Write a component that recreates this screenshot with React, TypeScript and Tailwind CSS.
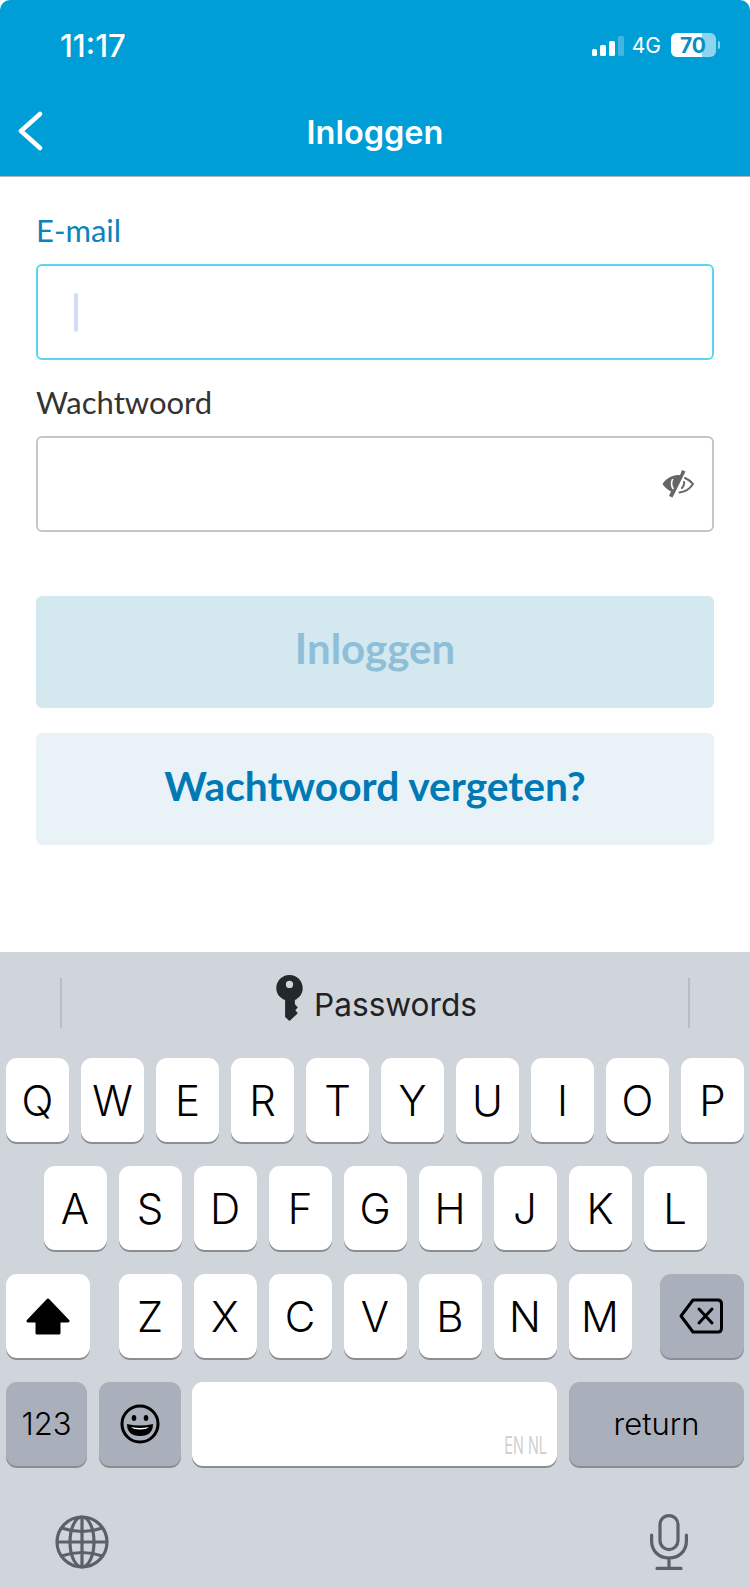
const SF = "font-['Inter','Liberation_Sans',sans-serif]";

const ROW1 = ["Q", "W", "E", "R", "T", "Y", "U", "I", "O", "P"];
const ROW2 = ["A", "S", "D", "F", "G", "H", "J", "K", "L"];
const ROW3 = ["Z", "X", "C", "V", "B", "N", "M"];

function Key({ label }: { label: string }) {
  return (
    <div className="w-[63px] h-[84px] rounded-[11px] bg-white shadow-[0_2px_0_#8b8d92] flex items-center justify-center pt-[1px] text-[42px] font-[350] text-black shrink-0">
      {label}
    </div>
  );
}

function ShiftIcon() {
  return (
    <svg className="mt-[2px]" width="44" height="38" viewBox="0 0 44 38">
      <path
        fill="#000"
        stroke="#000"
        strokeWidth="3"
        strokeLinejoin="round"
        d="M22 2 L42 23 H33 V35 H11 V23 H2 Z"
      />
    </svg>
  );
}

function DeleteIcon() {
  return (
    <svg className="-ml-[3px]" width="44" height="36" viewBox="0 0 44 36" fill="none" stroke="#000" strokeWidth="3" strokeLinecap="round" strokeLinejoin="round">
      <path d="M14 2 H39 Q42.500 2 42.500 6 V30 Q42.500 34 39 34 H14 L2 18 Z" />
      <path d="M20 11 L33 25 M33 11 L20 25" />
    </svg>
  );
}

function EmojiIcon() {
  return (
    <svg width="40" height="40" viewBox="0 0 40 40">
      <circle cx="20" cy="20" r="18" fill="none" stroke="#000" strokeWidth="3" />
      <ellipse cx="14" cy="14" rx="2.300" ry="3" fill="#000" />
      <ellipse cx="26" cy="14" rx="2.300" ry="3" fill="#000" />
      <path d="M7 20 Q20 23 33 20 Q33 32 20 32 Q7 32 7 20 Z" fill="#000" />
      <path d="M11 23 Q20 25 29 23 Q27 25.500 20 25.500 Q13 25.500 11 23 Z" fill="#fff" />
    </svg>
  );
}

function KeyIcon() {
  return (
    <svg width="27" height="46" viewBox="0 0 27 47">
      <path
        fill="#24272b"
        fillRule="evenodd"
        d="M13.500 0 C21 0 27 6 27 13.500 C27 19 23.500 23.500 19 25.500 V30 L22 33 L19.500 36 L22 39 L19 42 L13.500 47 L9 43 V25.500 C3.500 23.500 0 19 0 13.500 C0 6 6 0 13.500 0 Z M13.500 6 A3.700 3.700 0 1 0 13.500 13.400 A3.700 3.700 0 1 0 13.500 6 Z"
      />
    </svg>
  );
}

function GlobeIcon() {
  return (
    <svg width="54" height="54" viewBox="0 0 54 54" fill="none" stroke="#5c6169" strokeWidth="3.200">
      <circle cx="27" cy="27" r="25" />
      <ellipse cx="27" cy="27" rx="12" ry="25" />
      <path d="M27 2 V52 M2 27 H52" />
      <path d="M6.500 13 Q27 20 47.500 13 M6.500 41 Q27 34 47.500 41" />
    </svg>
  );
}

function MicIcon() {
  return (
    <svg width="38" height="56" viewBox="0 0 38 56" fill="none" stroke="#5c6169" strokeWidth="3.200" strokeLinecap="round">
      <rect x="10" y="1.600" width="18" height="34" rx="9" />
      <path d="M1.600 21 V27 C1.600 37 9 44 19 44 C29 44 36.400 37 36.400 27 V21" />
      <path d="M19 44 V54 M7 54.400 H31" />
    </svg>
  );
}

function EyeOffIcon() {
  return (
    <svg width="32" height="30" viewBox="0 0 32 30" fill="none">
      <path fill="#666666" d="M20 1 L23.500 2.500 L10.500 28.500 L7 27 L9 22.500 C5.500 20.500 2.500 18 0.500 15 C4 9.500 10 6 16 6 C17 6 17.500 6.100 18 6.200 Z" />
      <path stroke="#ffffff" strokeWidth="1.600" strokeLinecap="round" fill="none" d="M10.500 10.500 C9 14 9.500 17 11 19.500" />
      <path stroke="#666666" strokeWidth="2" strokeLinecap="round" d="M23 9 C26.500 10.500 29 12.500 31 15 C28 19.500 23.500 23 17.500 23.500 M22 13 C22.500 15.500 21.500 17.500 20 19" />
    </svg>
  );
}

function StatusIcons() {
  return (
    <div className="flex items-center">
      <div className="flex items-end gap-[3px] h-[20px] mt-[1px]">
        <div className="w-[5px] h-[7px] rounded-[1.500px] bg-white" />
        <div className="w-[5.500px] h-[11px] rounded-[1.500px] bg-white" />
        <div className="w-[6px] h-[15px] rounded-[1.500px] bg-white" />
        <div className="w-[6px] h-[20px] rounded-[1.500px] bg-white/25" />
      </div>
      <span className="ml-[8px] text-[21px] font-normal text-white leading-none">4G</span>
      <div className="ml-[10px] w-[45px] h-[24px] rounded-[6px] bg-[#8ed3f0] overflow-hidden relative">
        <div className="w-[31px] h-full bg-white" />
        <span className="absolute inset-0 pr-[1px] flex items-center justify-center text-[21px] font-bold leading-none text-[#0c8ec4]">70</span>
      </div>
      <div className="ml-[2px] w-[2px] h-[8px] rounded-r-full bg-[#8ed3f0]" />
    </div>
  );
}

export default function App() {
  return (
    <div className={`w-[750px] h-[1588px] flex flex-col bg-white overflow-hidden ${SF}`}>
      {/* header */}
      <div className="h-[177px] shrink-0 bg-[#009ed6] rounded-t-[10px] border-b border-[#b5b5b5] flex flex-col">
        <div className="h-[90px] pl-[60px] pr-[30px] flex items-center justify-between">
          <span className="text-[31px] font-medium text-white leading-none">11:17</span>
          <StatusIcons />
        </div>
        <div className="h-[86px] relative flex items-center justify-center">
          <svg className="absolute left-[18px] top-[21px]" width="25" height="40" viewBox="0 0 25 40" fill="none" stroke="#fff" strokeWidth="4.500" strokeLinecap="round" strokeLinejoin="round">
            <path d="M22 3 L3 20 L22 37" />
          </svg>
          <span className="text-[32.500px] font-semibold text-white leading-none">Inloggen</span>
        </div>
      </div>

      {/* form */}
      <div className="flex-1 px-[36px] pt-[35px] font-['Lato','Open_Sans',sans-serif]">
        <div className="h-[36px] text-[31px] leading-[36px] text-[#0a84ba]">E-mail</div>
        <div className="mt-[16px] h-[96px] rounded-[6px] border-2 border-[#5ad6ee] flex items-center pl-[36px]">
          <div className="w-[4px] h-[39px] rounded-full bg-[#d4dcf8]" />
        </div>
        <div className="mt-[24px] h-[36px] text-[31px] leading-[36px] text-[#333333]">Wachtwoord</div>
        <div className="mt-[16px] h-[96px] rounded-[6px] border-2 border-[#c6c6c6] flex items-center justify-end pr-[18px]">
          <EyeOffIcon />
        </div>
        <div className="mt-[64px] h-[112px] rounded-[6px] bg-[#d4e8ef] flex items-center justify-center pb-[7px] text-[42px] font-bold text-[#8fbfd8]">
          Inloggen
        </div>
        <div className="mt-[25px] h-[112px] rounded-[6px] bg-[#e9f2f7] flex items-center justify-center pb-[7px] text-[40.700px] font-bold text-[#0079b5]">
          Wachtwoord vergeten?
        </div>
      </div>

      {/* keyboard */}
      <div className="h-[636px] shrink-0 bg-[#d0d4db] flex flex-col">
        <div className="h-[106px] pt-[26px] px-[60px]">
          <div className="h-[50px] flex items-center justify-between">
            <div className="w-[2px] h-full bg-[#b9bcc4]" />
            <div className="flex items-center gap-[11px] pl-[3px]">
              <div className="-mt-[11px]"><KeyIcon /></div>
              <span className="text-[31.600px] text-[#202225] leading-none pt-[3px]">Passwords</span>
            </div>
            <div className="w-[2px] h-full bg-[#b9bcc4]" />
          </div>
        </div>
        <div className="flex flex-col gap-[24px] px-[6px]">
          <div className="flex justify-between">
            {ROW1.map(k => <Key key={k} label={k} />)}
          </div>
          <div className="flex gap-[12px] pl-[37.500px]">
            {ROW2.map(k => <Key key={k} label={k} />)}
          </div>
          <div className="flex">
            <div className="w-[84px] h-[84px] rounded-[11px] bg-white shadow-[0_2px_0_#8b8d92] flex items-center justify-center">
              <ShiftIcon />
            </div>
            <div className="ml-[28.500px] flex gap-[12px]">
              {ROW3.map(k => <Key key={k} label={k} />)}
            </div>
            <div className="ml-auto w-[84px] h-[84px] rounded-[11px] bg-[#a9afbb] shadow-[0_2px_0_#8b8d92] flex items-center justify-center">
              <DeleteIcon />
            </div>
          </div>
          <div className="flex">
            <div className="w-[81px] h-[84px] rounded-[11px] bg-[#a9afbb] shadow-[0_2px_0_#8b8d92] flex items-center justify-center text-[31px] font-[350] text-black">123</div>
            <div className="ml-[12px] w-[82px] h-[84px] rounded-[11px] bg-[#a9afbb] shadow-[0_2px_0_#8b8d92] flex items-center justify-center">
              <EmojiIcon />
            </div>
            <div className="ml-[11px] w-[365px] h-[84px] rounded-[11px] bg-white shadow-[0_2px_0_#8b8d92] relative">
              <span className="absolute right-[10px] bottom-[8px] origin-right scale-x-[0.6] text-[24px] leading-none text-[#d0d0d0] whitespace-nowrap">EN NL</span>
            </div>
            <div className="ml-[12px] w-[175px] h-[84px] rounded-[11px] bg-[#a9afbb] shadow-[0_2px_0_#8b8d92] flex items-center justify-center text-[31px] font-[350] text-black">return</div>
          </div>
        </div>
        <div className="mt-[48px] pl-[55px] pr-[62px] flex items-center justify-between">
          <GlobeIcon />
          <MicIcon />
        </div>
      </div>
    </div>
  );
}
